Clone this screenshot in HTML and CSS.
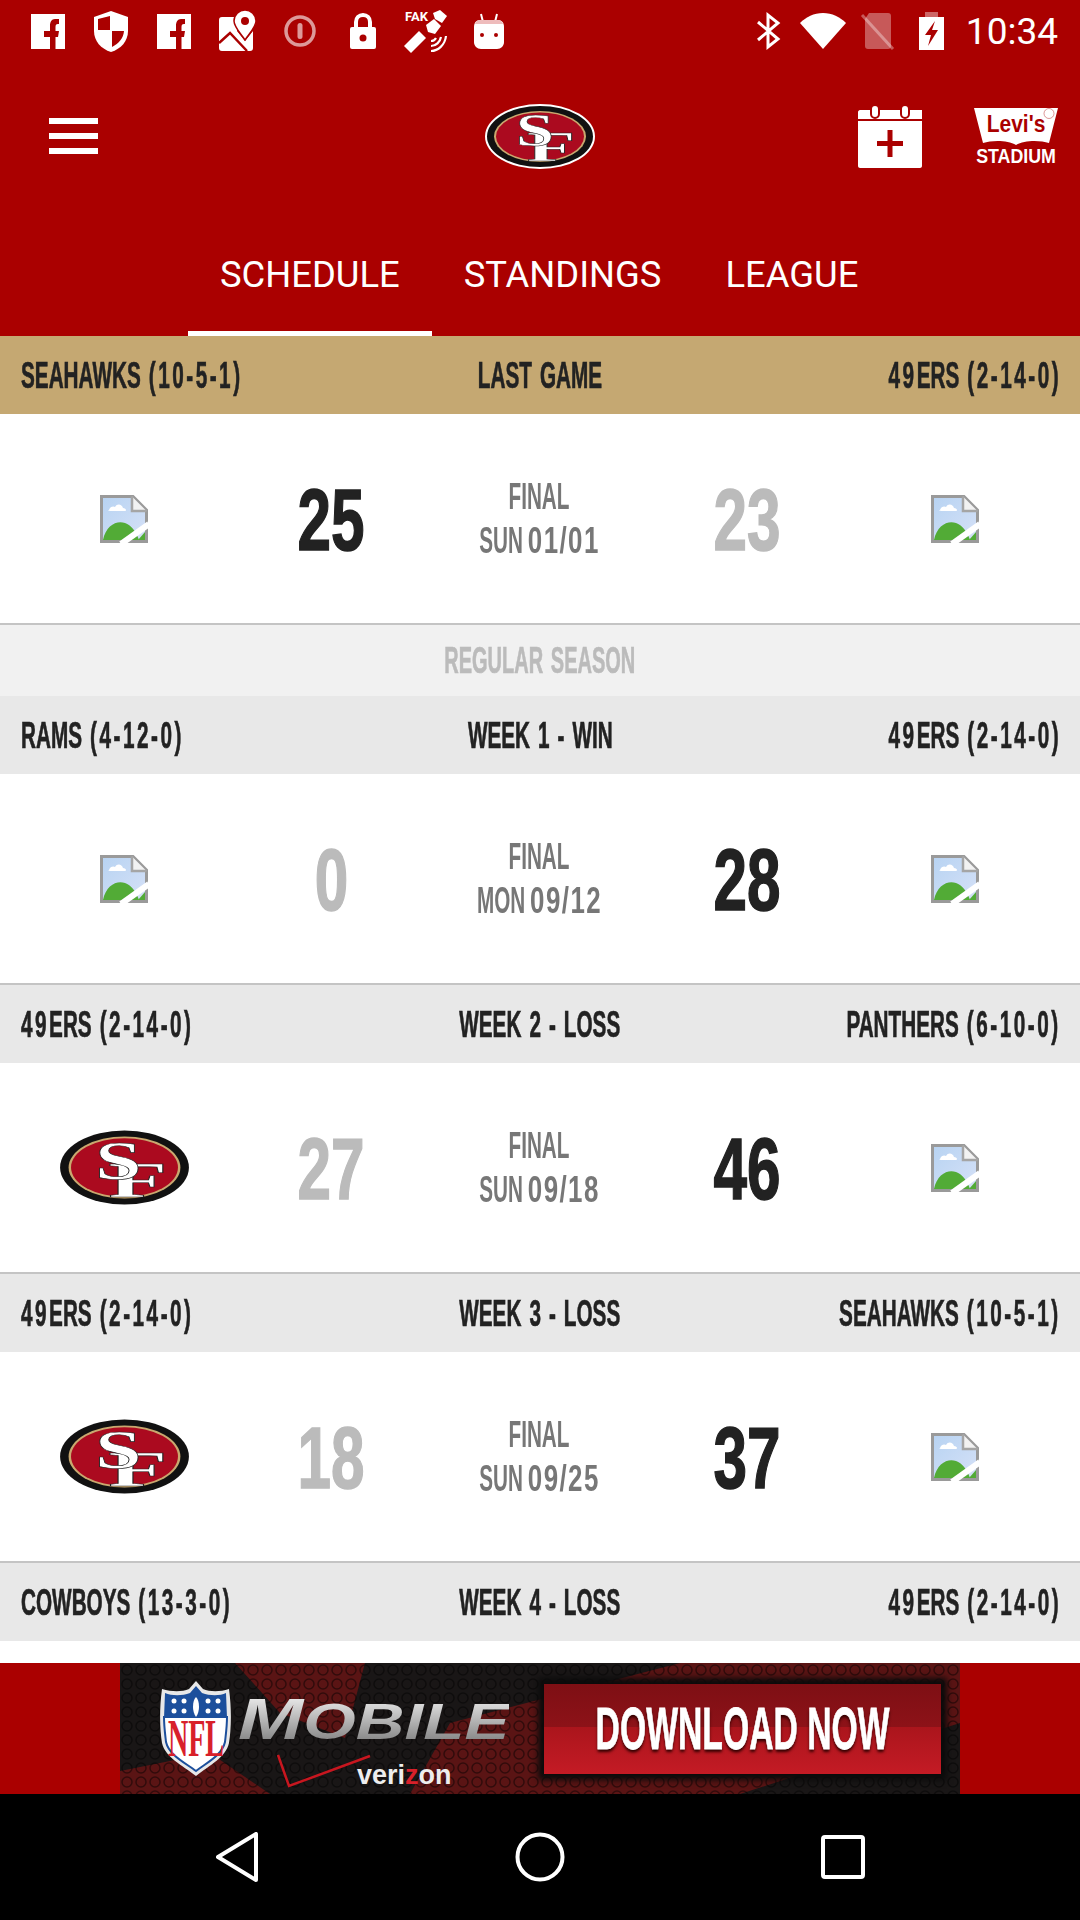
FILE: index.html
```html
<!DOCTYPE html>
<html lang="en">
<head>
<meta charset="utf-8">
<title>49ers Schedule</title>
<link rel="stylesheet" href="styles.css">
</head>
<body>
<svg class="sprite" aria-hidden="true">
  <defs>
    <symbol id="sf" viewBox="0 0 110 65">
      <ellipse cx="55" cy="32.5" rx="55" ry="32.5" fill="#fff"/>
      <ellipse cx="55" cy="32.5" rx="53" ry="30.5" fill="#111"/>
      <ellipse cx="55" cy="32.5" rx="46" ry="25.5" fill="#c9a86f"/>
      <ellipse cx="55" cy="32.5" rx="44" ry="24" fill="#ab0a1f"/>
      <text class="sf-letter sf-f" transform="translate(66 57) scale(1.9 1)">F</text>
      <text class="sf-letter" transform="translate(50 42) scale(1.5 1)">S</text>
    </symbol>
    <symbol id="broken" viewBox="0 0 48 48">
      <path d="M1.500 1.500H33L46.500 15V46.500H1.500Z" fill="url(#sky)" stroke="#9a9a9a" stroke-width="3"/>
      <path d="M32 1.500V16H46.500" fill="#f2f2f2" stroke="#a5a5a5" stroke-width="2.500"/>
      <path d="M9 15c1-4 5-4 6-3 2-4 7-3 8 1 3 0 4 3 2 3H10c-2 0-2-1-1-1Z" fill="#fff"/>
      <path d="M3 45C6 30 17 25 25 28c6 2 11 8 14 17Z" fill="#52ab36"/>
      <path d="M38 45h7v-8Z" fill="#52ab36"/>
      <path d="M21 49 49 29" stroke="#fff" stroke-width="6"/>
    </symbol>
    <linearGradient id="sky" x1="0" y1="0" x2="1" y2="1">
      <stop offset="0" stop-color="#b7d3f2"/>
      <stop offset="1" stop-color="#d6e1f7"/>
    </linearGradient>
    <symbol id="fb" viewBox="0 0 34 35">
      <path fill="#fff" d="M0 0H34V35H24.500V23H27L28 17H24.500V13C24.500 11 25 10 27 10H28V5C27 5 26 5 24 5 20.500 5 19 8 19 12V17H13V23H19V35H0Z"/>
    </symbol>
    <pattern id="honey" width="14" height="14" patternUnits="userSpaceOnUse">
      <circle cx="7" cy="7" r="5" fill="none" stroke="#000" stroke-opacity=".45" stroke-width="1.500"/>
    </pattern>
  </defs>
</svg>

<div class="app">
  <header class="appbar">
    <div class="status">
      <div class="status-left">
        <span class="slot"><svg class="i-fb"><use href="#fb"/></svg></span>
        <span class="slot">
          <svg class="i-shield" viewBox="0 0 34 41"><path fill="#fff" d="M17 0 34 6V20C34 30 27 38 17 41 7 38 0 30 0 20V6Z"/><path fill="#aa0000" d="M16 5V19H4V8ZM18 20H30C29.500 27 25 32.500 18 36Z"/></svg>
        </span>
        <span class="slot"><svg class="i-fb"><use href="#fb"/></svg></span>
        <span class="slot">
          <svg class="i-map" viewBox="0 0 36 40"><path fill="#fff" d="M3 6H18V20L26 30 34 20V37C34 39 33 40 31 40H3C1 40 0 39 0 37V9C0 7 1 6 3 6Z"/><path fill="none" stroke="#aa0000" stroke-width="2.500" d="M0 32 11 22 28 40"/><path fill="#fff" stroke="#aa0000" stroke-width="1.500" d="M26 -1C32 -1 37 4 37 10 37 16 30 23 26 29 22 23 15 16 15 10 15 4 20 -1 26 -1Z"/><circle cx="26" cy="10" r="4" fill="#aa0000"/></svg>
        </span>
        <span class="slot">
          <svg class="i-info" viewBox="0 0 32 32"><circle cx="16" cy="16" r="14" fill="none" stroke="#fff" stroke-width="3.500"/><rect x="13.500" y="8" width="5" height="16" rx="2.500" fill="#fff"/></svg>
        </span>
        <span class="slot">
          <svg class="i-lock" viewBox="0 0 26 36"><path fill="none" stroke="#fff" stroke-width="4" d="M6 16V9C6 5 9 2 13 2S20 5 20 9V16"/><rect y="14" width="26" height="22" rx="2" fill="#fff"/><circle cx="13" cy="25" r="3.500" fill="#aa0000"/></svg>
        </span>
        <span class="slot">
          <svg class="i-gps" viewBox="0 0 43 43"><text x="1" y="11" class="gps-text">FAK</text><g fill="#fff"><path d="M29 3 36 0 43 6 38 13 31 9Z"/><path d="M22 15 30 9 37 16 31 24 24 22Z"/><path d="M0 36 15 21 22 28 7 43Z"/></g><path fill="none" stroke="#fff" stroke-width="2.200" d="M27 41C34 41 41 35 42 26M27 36C32 36 36 32 37 27M27 31C29 31 31 30 32 28"/></svg>
        </span>
        <span class="slot">
          <svg class="i-android" viewBox="0 0 30 35"><path stroke="#fff" stroke-width="2" d="M7 0 9 8M23 0 21 8"/><path fill="#fff" d="M6 6H24C28 6 30 9 30 13V28C30 32 27 35 23 35H7C3 35 0 32 0 28V13C0 9 2 6 6 6Z"/><path fill="#eebcbc" d="M6 6H24C26 6 28 7 29 10H1C2 7 4 6 6 6Z"/><circle cx="8" cy="21" r="2" fill="#aa0000"/><circle cx="22" cy="21" r="2" fill="#aa0000"/></svg>
        </span>
      </div>
      <div class="status-right">
        <span class="slot-sm">
          <svg class="i-bt" viewBox="0 0 23 36"><path fill="none" stroke="#fff" stroke-width="3" d="M1 9 21 26 11 34V2L21 10 1 27"/></svg>
        </span>
        <span class="slot-sm">
          <svg class="i-wifi" viewBox="0 0 46 36"><path fill="#fff" d="M0 10C6 4 14 0 23 0S40 4 46 10L23 36Z"/></svg>
        </span>
        <span class="slot-sm">
          <svg class="i-sim" viewBox="0 0 33 36"><path fill="#fff" fill-opacity=".35" d="M8 0H27C29 0 30 1 30 3V33C30 35 29 36 27 36H7C5 36 4 35 4 33V6Z"/><path stroke="#fff" stroke-opacity=".35" stroke-width="3" d="M1 2 32 36"/></svg>
        </span>
        <span class="slot-sm">
          <svg class="i-batt" viewBox="0 0 25 38"><path fill="#fff" fill-opacity=".4" d="M6 0H19V5H25V8H0V5H6Z"/><path fill="#fff" d="M0 5H25V38H0Z"/><path fill="#aa0000" d="M16 9 6 23H12L9 34 19 18H13Z"/></svg>
        </span>
        <span class="clock">10:34</span>
      </div>
    </div>

    <div class="toolbar">
      <div class="menu"><span></span><span></span><span></span></div>
      <svg class="logo-top"><use href="#sf"/></svg>
      <div class="toolbar-actions">
        <svg class="i-cal" viewBox="0 0 64 63"><path fill="#fff" d="M2 5H64V61C64 62 63 63 62 63H2C1 63 0 62 0 61V7C0 6 1 5 2 5Z"/><rect y="14" width="64" height="2" fill="#aa0000"/><rect x="13" y="0" width="8" height="13" rx="4" fill="#fff" stroke="#aa0000" stroke-width="2"/><rect x="43" y="0" width="8" height="13" rx="4" fill="#fff" stroke="#aa0000" stroke-width="2"/><path fill="#aa0000" d="M29.500 25H34.500V36H45V41H34.500V52H29.500V41H19V36H29.500Z"/></svg>
        <svg class="i-levis" viewBox="0 0 84 56"><path fill="#fff" d="M0 0H84L75 35C66 32 50 32 42 37 34 32 18 32 9 35Z"/><text class="levis-name" transform="translate(42 24) scale(1 1.1)">Levi's</text><circle cx="75" cy="5.500" r="5" fill="none" stroke="#aa0000" stroke-opacity=".4" stroke-width="1"/><text class="levis-sub" transform="translate(42 55) scale(.89 1)">STADIUM</text></svg>
      </div>
    </div>

    <nav class="tabs">
      <a class="tab tab-active">SCHEDULE</a>
      <a class="tab">STANDINGS</a>
      <a class="tab">LEAGUE</a>
    </nav>
  </header>

  <main class="list">
    <div class="head head-gold">
      <span class="label label-l">SEAHAWKS <span class="rec">(10-5-1)</span></span>
      <span class="label label-c">LAST GAME</span>
      <span class="label label-r"><span class="rec">49</span>ERS <span class="rec">(2-14-0)</span></span>
    </div>
    <div class="game">
      <span class="team"><svg class="broken"><use href="#broken"/></svg></span>
      <span class="score"><b class="num">25</b></span>
      <span class="result"><span class="res-line">FINAL</span><span class="res-line">SUN <span class="date">01/01</span></span></span>
      <span class="score score-lose"><b class="num">23</b></span>
      <span class="team"><svg class="broken"><use href="#broken"/></svg></span>
    </div>

    <div class="season"><span class="label label-c">REGULAR SEASON</span></div>

    <div class="head">
      <span class="label label-l">RAMS <span class="rec">(4-12-0)</span></span>
      <span class="label label-c">WEEK 1 - WIN</span>
      <span class="label label-r"><span class="rec">49</span>ERS <span class="rec">(2-14-0)</span></span>
    </div>
    <div class="game">
      <span class="team"><svg class="broken"><use href="#broken"/></svg></span>
      <span class="score score-lose"><b class="num">0</b></span>
      <span class="result"><span class="res-line">FINAL</span><span class="res-line">MON <span class="date">09/12</span></span></span>
      <span class="score"><b class="num">28</b></span>
      <span class="team"><svg class="broken"><use href="#broken"/></svg></span>
    </div>

    <div class="head">
      <span class="label label-l"><span class="rec">49</span>ERS <span class="rec">(2-14-0)</span></span>
      <span class="label label-c">WEEK 2 - LOSS</span>
      <span class="label label-r">PANTHERS <span class="rec">(6-10-0)</span></span>
    </div>
    <div class="game">
      <span class="team"><svg class="logo-row"><use href="#sf"/></svg></span>
      <span class="score score-lose"><b class="num">27</b></span>
      <span class="result"><span class="res-line">FINAL</span><span class="res-line">SUN <span class="date">09/18</span></span></span>
      <span class="score"><b class="num">46</b></span>
      <span class="team"><svg class="broken"><use href="#broken"/></svg></span>
    </div>

    <div class="head">
      <span class="label label-l"><span class="rec">49</span>ERS <span class="rec">(2-14-0)</span></span>
      <span class="label label-c">WEEK 3 - LOSS</span>
      <span class="label label-r">SEAHAWKS <span class="rec">(10-5-1)</span></span>
    </div>
    <div class="game">
      <span class="team"><svg class="logo-row"><use href="#sf"/></svg></span>
      <span class="score score-lose"><b class="num">18</b></span>
      <span class="result"><span class="res-line">FINAL</span><span class="res-line">SUN <span class="date">09/25</span></span></span>
      <span class="score"><b class="num">37</b></span>
      <span class="team"><svg class="broken"><use href="#broken"/></svg></span>
    </div>

    <div class="head">
      <span class="label label-l">COWBOYS <span class="rec">(13-3-0)</span></span>
      <span class="label label-c">WEEK 4 - LOSS</span>
      <span class="label label-r"><span class="rec">49</span>ERS <span class="rec">(2-14-0)</span></span>
    </div>
    <div class="filler"></div>
  </main>

  <aside class="adbar">
    <div class="ad">
      <svg class="ad-bg" viewBox="0 0 840 131" preserveAspectRatio="none">
        <rect width="840" height="131" fill="#191616"/>
        <path fill="#5a1414" d="M115 0H245L225 75 160 50ZM0 131V108L90 90 150 131ZM290 131 330 60 560 0H840V60L620 131Z"/>
        <rect width="840" height="131" fill="url(#honey)"/>
      </svg>
      <svg class="nfl" viewBox="0 0 71 95">
        <path fill="#e8e8e8" d="M36 0 43 8C50 11 60 11 69 8 72 30 71 50 69 62 66 76 50 84 36 95 22 84 5 76 2 62 0 50-1 30 2 8 12 11 22 11 29 8Z"/>
        <path fill="#fff" stroke="#1c4f9c" stroke-width="2" d="M36 90 C24 81 9 74 6 61 5 52 4 45 4 36H67C67 45 66 52 65 61 62 74 48 81 36 90Z"/>
        <path fill="#1c4f9c" d="M36 5 42 12C50 15 60 15 66 12L67 37H4L5 12C12 15 22 15 30 12Z"/>
        <path fill="#fff" d="M36 16C40 20 40 31 36 36 32 31 32 20 36 16Z"/>
        <g fill="#fff"><circle cx="14" cy="20" r="2.500"/><circle cx="24" cy="20" r="2.500"/><circle cx="48" cy="20" r="2.500"/><circle cx="58" cy="20" r="2.500"/><circle cx="14" cy="30" r="2.500"/><circle cx="24" cy="30" r="2.500"/><circle cx="48" cy="30" r="2.500"/><circle cx="58" cy="30" r="2.500"/></g>
        <text class="nfl-text" transform="translate(36 75) scale(.54 1)">NFL</text>
      </svg>
      <div class="ad-brand">
        <span class="ad-mobile"><span class="ad-m">M</span>OBILE</span>
        <span class="ad-vz"><svg class="vz-check" viewBox="0 0 94 34"><path fill="none" stroke="#c8161f" stroke-width="2.500" d="M1 1 12 32 93 2"/></svg><span class="vz-name">veri<em>z</em>on</span></span>
      </div>
      <div class="ad-btn"><span class="ad-btn-text">DOWNLOAD NOW</span></div>
    </div>
  </aside>

  <footer class="navbar">
    <span class="nav-slot"><svg class="nav-back" viewBox="0 0 42 50"><path fill="none" stroke="#fff" stroke-width="4" stroke-linejoin="round" d="M40 2V48L2 25Z"/></svg></span>
    <span class="nav-slot"><svg class="nav-home" viewBox="0 0 50 50"><circle cx="25" cy="25" r="22.500" fill="none" stroke="#fff" stroke-width="4"/></svg></span>
    <span class="nav-slot"><svg class="nav-recent" viewBox="0 0 44 44"><rect x="2" y="2" width="40" height="40" rx="2" fill="none" stroke="#fff" stroke-width="4"/></svg></span>
  </footer>
</div>
</body>
</html>
```
FILE: styles.css
```css
* { box-sizing: border-box; }
html, body { margin: 0; padding: 0; }
body { width: 1080px; height: 1920px; overflow: hidden; background: #000; font-family: "Liberation Sans", Arial, sans-serif; }
.sprite { position: absolute; width: 0; height: 0; }

.app { width: 1080px; height: 1920px; display: flex; flex-direction: column; background: #fff; }

/* app bar */
.appbar { height: 336px; background: #aa0000; color: #fff; flex: none; }
.status { height: 62px; display: flex; justify-content: space-between; align-items: center; padding: 0 22px 0 16px; }
.status-left, .status-right { display: flex; align-items: center; }
.slot { width: 63px; display: flex; justify-content: center; }
.slot-sm { width: 54.500px; display: flex; justify-content: center; }
.status svg { display: block; overflow: visible; }
.i-fb { width: 34px; height: 35px; }
.i-shield { width: 34px; height: 41px; }
.i-map { width: 36px; height: 40px; }
.i-info { width: 32px; height: 32px; opacity: .6; }
.i-lock { width: 26px; height: 36px; }
.i-gps { width: 43px; height: 43px; }
.i-android { width: 30px; height: 35px; }
.i-bt { width: 23px; height: 36px; }
.i-wifi { width: 46px; height: 36px; }
.i-sim { width: 33px; height: 36px; }
.i-batt { width: 25px; height: 38px; }
.gps-text { font: 700 13px Roboto, sans-serif; fill: #fff; }
.clock { font: 400 37px/1 Roboto, sans-serif; margin-left: 7px; }

.toolbar { height: 148px; display: grid; grid-template-columns: 1fr auto 1fr; align-items: center; }
.menu { display: flex; flex-direction: column; gap: 9px; padding-left: 49px; }
.menu span { display: block; width: 49px; height: 6px; background: #fff; }
.logo-top { width: 110px; height: 65px; display: block; }
.toolbar-actions { display: flex; justify-content: flex-end; align-items: center; gap: 52px; padding-right: 22px; }
.i-cal { width: 64px; height: 63px; display: block; }
.i-levis { width: 84px; height: 56px; display: block; overflow: visible; }
.levis-name { font: 700 21px "Liberation Sans", sans-serif; fill: #aa0000; text-anchor: middle; }
.levis-sub { font: 700 20px "Liberation Sans", sans-serif; fill: #fff; text-anchor: middle; }
.sf-letter { font: 700 46px "Liberation Serif", serif; fill: #fff; stroke: #222; stroke-width: .5px; text-anchor: middle; }
.sf-f { font-size: 42px; }

.tabs { height: 126px; display: flex; padding-left: 188px; }
.tab { display: flex; align-items: center; padding: 7px 32px 0; border-bottom: 5px solid transparent; font: 400 36.400px Roboto, sans-serif; color: #fff; }
.tab-active { border-bottom-color: #fff; }

/* list */
.list { flex: 1; min-height: 0; display: flex; flex-direction: column; }
.head { flex: none; height: 78px; background: #e8e8e8; display: grid; grid-template-columns: minmax(0, 1fr) auto minmax(0, 1fr); align-items: center; padding: 0 21px; }
.head-gold { background: #c5a872; }
.label { display: inline-block; white-space: nowrap; font: 700 37px/1 "Liberation Sans", sans-serif; word-spacing: 4px; color: #222; transform: scaleX(.56); -webkit-text-stroke: .7px currentColor; }
.rec { letter-spacing: 4.500px; }
.label-l { transform-origin: left center; justify-self: start; }
.label-c { transform-origin: center; justify-self: center; }
.label-r { transform-origin: right center; justify-self: end; margin-right: -2px; }
.season { flex: none; height: 71px; background: #f1f1f1; display: flex; align-items: center; justify-content: center; }
.season .label { color: #bbb; transform: scaleX(.54); }

.game { flex: none; height: 211px; border-bottom: 2px solid #c4c4c4; background: #fff; display: grid; grid-template-columns: 248px 166px 250px 166px 250px; align-items: center; }
.team { display: flex; justify-content: center; align-items: center; }
.broken { width: 48px; height: 48px; display: block; }
.logo-row { width: 135px; height: 79px; display: block; }
.score { text-align: center; color: #222; padding-top: 2px; }
.score-lose { color: #bbb; }
.num { display: inline-block; font: 700 88px/1 "Liberation Sans", sans-serif; transform: scaleX(.685); -webkit-text-stroke: 1.500px currentColor; }
.result { display: flex; flex-direction: column; align-items: center; gap: 8px; padding-top: 1px; }
.res-line { font: 700 36px/36px "Liberation Sans", sans-serif; color: #777; transform: scaleX(.575); white-space: nowrap; }
.date { display: inline-block; margin: 0 11px; letter-spacing: 2px; transform: scaleX(1.25); }
.filler { flex: 1; }

/* ad */
.adbar { flex: none; height: 131px; background: #aa0000; display: flex; justify-content: center; }
.ad { position: relative; width: 840px; display: flex; align-items: center; padding: 0 19px 0 40px; overflow: hidden; }
.ad-bg { position: absolute; left: 0; top: 0; width: 840px; height: 131px; }
.nfl { position: relative; width: 71px; height: 95px; flex: none; display: block; }
.nfl-text { font: 700 52px "Liberation Serif", serif; fill: #d8202a; text-anchor: middle; }
.ad-brand { position: relative; width: 273px; margin-left: 7px; height: 131px; display: flex; flex-direction: column; align-items: flex-start; padding-top: 30px; flex: none; }
.ad-mobile { display: inline-block; white-space: nowrap; font: italic 700 50px/52px "Liberation Sans", sans-serif; background: linear-gradient(#f2f2f2, #777); -webkit-background-clip: text; background-clip: text; color: transparent; transform: scaleX(1.35); transform-origin: left center; }
.ad-m { font-size: 58px; }
.ad-vz { display: flex; align-items: flex-end; margin-left: 39px; margin-top: 6px; }
.vz-check { width: 94px; height: 34px; display: block; flex: none; }
.vz-name { font: 700 27px/1 "Liberation Sans", sans-serif; color: #eee; margin-left: -14px; margin-bottom: -1px; }
.vz-name em { color: #d8202a; font-style: normal; }
.ad-btn { position: relative; margin-left: 33px; width: 397px; height: 90px; box-shadow: 0 0 6px 6px #0b0b0b; background: linear-gradient(#7e0f14 0, #8d1218 48%, #ab151c 48%, #c41b25 100%); display: flex; align-items: center; justify-content: center; flex: none; }
.ad-btn-text { display: inline-block; white-space: nowrap; font: 700 60px/1 "Liberation Sans", sans-serif; color: #fff; transform: scaleX(.562); text-shadow: 0 3px 4px #300; -webkit-text-stroke: .8px #fff; }

/* nav */
.navbar { flex: none; height: 126px; background: #000; display: flex; justify-content: center; align-items: center; }
.nav-slot { width: 303px; display: flex; justify-content: center; }
.nav-back { width: 42px; height: 50px; display: block; }
.nav-home { width: 50px; height: 50px; display: block; }
.nav-recent { width: 44px; height: 44px; display: block; }
```
